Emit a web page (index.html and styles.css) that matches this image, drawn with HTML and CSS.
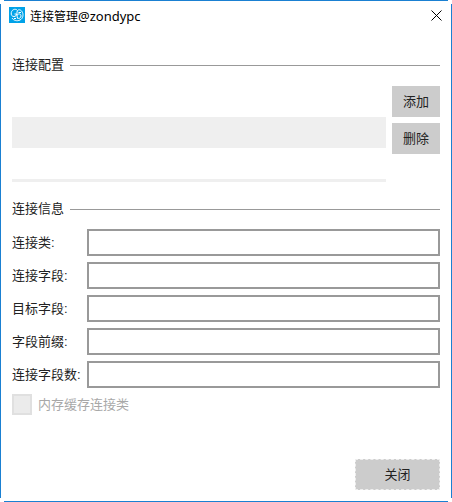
FILE: index.html
```
<!DOCTYPE html>
<html lang="zh-CN">
<head>
  <meta charset="UTF-8">
  <meta name="viewport" content="width=device-width, initial-scale=1.0">
  <title>连接管理</title>
  <link rel="stylesheet" href="styles.css">
</head>
<body>
  <div class="window">
    <header class="titlebar">
      <svg class="logo" viewBox="0 0 16 16" aria-hidden="true">
        <rect width="16" height="16" fill="#00a2e8"/>
        <g fill="none" stroke="#fff" stroke-width="1">
          <path d="M8 3C6 1.500 3 2.500 2.300 5.500C1.800 8 3 9.500 5 9.500C6.500 9.500 7.500 8.500 7.500 7H5.500"/>
          <path d="M3 11C4.500 13.500 8 14.500 11 13C14 11.500 14.500 8 13.500 5.500C12.500 3 10 2 8.500 3.500C7.500 5 8 9 8.500 11.500"/>
          <path d="M8.200 8C10 6 12 7 12 9C12 11 10 12 8.500 11"/>
          <path d="M9.500 5.500H12M5 11.500H7"/>
        </g>
      </svg>
      <h1>连接管理<span class="host">@zondypc</span></h1>
      <button class="close-icon" type="button" aria-label="关闭">
        <svg viewBox="0 0 11 11" aria-hidden="true">
          <path d="M0.500 0.500L10.500 10.500M10.500 0.500L0.500 10.500" fill="none" stroke="#000"/>
        </svg>
      </button>
    </header>

    <form class="content">
      <h2>连接配置</h2>
      <div class="config">
        <ul class="config-list">
          <li></li>
          <li></li>
          <li></li>
          <li></li>
        </ul>
        <div class="config-buttons">
          <button class="btn" type="button">添加</button>
          <button class="btn" type="button">删除</button>
        </div>
      </div>

      <h2>连接信息</h2>
      <div class="fields">
        <label for="linkClass">连接类:</label>
        <input id="linkClass" type="text">
        <label for="linkField">连接字段:</label>
        <input id="linkField" type="text">
        <label for="targetField">目标字段:</label>
        <input id="targetField" type="text">
        <label for="fieldPrefix">字段前缀:</label>
        <input id="fieldPrefix" type="text">
        <label for="fieldCount">连接字段数:</label>
        <input id="fieldCount" type="text">
      </div>
      <div class="cache">
        <input id="cacheClass" type="checkbox" disabled>
        <label for="cacheClass">内存缓存连接类</label>
      </div>

      <footer>
        <button class="btn btn-close" type="button">关闭</button>
      </footer>
    </form>
  </div>
</body>
</html>
```
FILE: styles.css
```
* {
  box-sizing: border-box;
}

body {
  margin: 0;
  background: #fff;
  color: #222;
  font-family: "Liberation Sans", "Noto Sans CJK SC", sans-serif;
  font-size: 13px;
  line-height: 18px;
}

/* thin frame, open at the corners */
.window {
  display: flex;
  flex-direction: column;
  min-height: 100vh;
  background:
    linear-gradient(#1a80d2, #1a80d2) top / calc(100% - 8px) 1px no-repeat,
    linear-gradient(#1a80d2, #1a80d2) bottom / calc(100% - 8px) 1px no-repeat,
    linear-gradient(#1a80d2, #1a80d2) left / 1px calc(100% - 8px) no-repeat,
    linear-gradient(#1a80d2, #1a80d2) right / 1px calc(100% - 8px) no-repeat;
}

.titlebar {
  display: flex;
  align-items: center;
  height: 30px;
  padding: 0 10px 0 9px;
}

.logo {
  width: 16px;
  height: 16px;
  margin-right: 5px;
}

h1 {
  flex: 1;
  margin: 0;
  padding-top: 2px;
  color: #000;
  font-family: "Noto Sans", "Noto Sans CJK SC", sans-serif;
  font-size: 12px;
  font-weight: normal;
}

.host {
  font-size: 13px;
}

.close-icon {
  display: flex;
  padding: 0;
  border: 0;
  background: none;
}

.close-icon svg {
  width: 11px;
  height: 11px;
}

.content {
  display: flex;
  flex: 1;
  flex-direction: column;
  padding: 26px 12px 12px;
}

h2 {
  display: flex;
  align-items: center;
  gap: 6px;
  margin: 0;
  font-size: 13px;
  font-weight: normal;
}

h2::after {
  content: "";
  flex: 1;
  height: 1px;
  background: #999;
}

.config {
  display: flex;
  gap: 6px;
  margin: 12px 0 18px;
}

.config-list {
  flex: 1;
  height: 96px;
  margin: 0;
  padding: 0;
  overflow: hidden;
  list-style: none;
}

.config-list li {
  height: 31px;
}

.config-list li:nth-child(even) {
  background: #efefef;
}

.config-buttons {
  display: flex;
  flex-direction: column;
  gap: 6px;
}

.btn {
  width: 48px;
  height: 31px;
  padding: 0;
  border: 0;
  background: #ccc;
  color: #222;
  font: inherit;
}

.fields {
  display: grid;
  grid-template-columns: 69px 1fr;
  gap: 6px;
  align-items: center;
  margin-top: 11px;
  white-space: nowrap;
}

.fields input {
  width: 100%;
  height: 27px;
  padding: 0 4px;
  border: 2px solid #999;
  background: #fff;
  font: inherit;
}

.cache {
  display: flex;
  align-items: center;
  gap: 6px;
  margin-top: 6px;
  color: #a8a8a8;
}

.cache input {
  appearance: none;
  width: 20px;
  height: 21px;
  margin: 0;
  border: 2px solid #e0e0e0;
  background: #ebebeb;
}

footer {
  display: flex;
  justify-content: flex-end;
  margin-top: auto;
}

.btn-close {
  width: 85px;
  border: 1px dashed #eee;
}
```
